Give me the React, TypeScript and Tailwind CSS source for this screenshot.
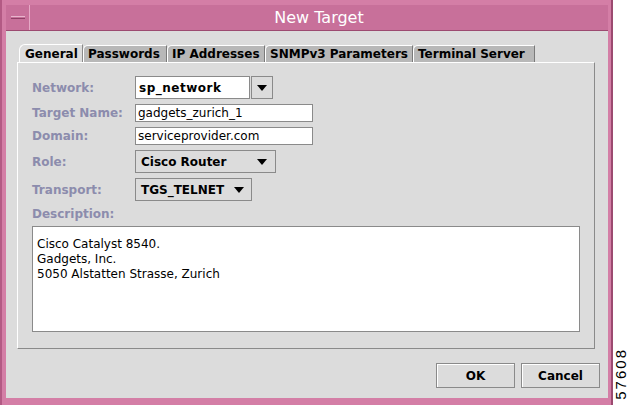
import React from 'react';

const font = { fontFamily: '"DejaVu Sans", "Liberation Sans", sans-serif' };

function Arrow() {
  return (
    <svg width="10" height="6" viewBox="0 0 10 6" className="shrink-0">
      <path d="M0 0 H10 L5 6 Z" fill="#000" />
    </svg>
  );
}

const tabs = [
  { name: 'General', w: 'w-[64px]' },
  { name: 'Passwords', w: 'w-[84px]' },
  { name: 'IP Addresses', w: 'w-[98px]' },
  { name: 'SNMPv3 Parameters', w: 'w-[148px]' },
  { name: 'Terminal Server', w: 'w-[122px]' },
];

function Label({ children }: { children: React.ReactNode }) {
  return <div className="w-[103px] shrink-0 text-[12px] font-bold text-[#8c8cad]">{children}</div>;
}

export default function App() {
  return (
    <div className="flex h-[405px] w-[628px] bg-white" style={font}>
      {/* window frame */}
      <div className="flex h-[405px] w-[613px] flex-col border-l-2 border-r-2 border-l-[#b35a84] border-r-[#9c4a70] bg-[#d47ea6] pl-[4px] pr-[3px] pt-[5px] pb-[7px]">
        {/* title bar */}
        <div className="flex h-[26px] shrink-0 items-center border-b border-[#9c4a70] bg-[#c8709a]">
          <div className="flex h-full w-[24px] items-center justify-center border-r border-[#e6a9c6]">
            <div className="h-[3px] w-[14px] border-y border-t-[#e8b6cd] border-b-[#8f4166] bg-[#c8709a]" />
          </div>
          <div className="flex-1 text-center text-[16px] text-white">New Target</div>
        </div>

        {/* content */}
        <div className="flex flex-1 flex-col bg-[#dcdcdc] pl-[11px] pr-[7px]">
          {/* tabs */}
          <div className="mt-[13px] flex h-[18px] items-end pl-[2px]">
            {tabs.map((t, i) => (
              <div
                key={t.name}
                className={
                  i === 0
                    ? `${t.w} flex h-[18px] items-center rounded-tl-[6px] border-l border-t border-r border-l-white border-t-white border-r-[#8a8a8a] bg-[#dcdcdc] pl-[5px] text-[12px] font-bold text-black`
                    : `${t.w} flex h-[17px] items-center rounded-tl-[5px] border-l border-t border-r border-l-white border-t-white border-r-[#7a7a7a] bg-[#b8b8b8] pl-[4px] text-[12px] font-bold text-black`
                }
              >
                {t.name}
              </div>
            ))}
          </div>

          {/* panel */}
          <div className="flex h-[287px] w-[578px] flex-col border-l border-t border-r border-b border-l-white border-t-white border-r-[#8a8a8a] border-b-[#8a8a8a] px-[14px] pt-[13px] pb-[16px]">
            <div className="flex flex-col gap-[5px]">
              <div className="flex h-[23px] items-center">
                <Label>Network:</Label>
                <div className="flex h-[23px]">
                  <div className="flex w-[115px] items-center border border-[#8a8a8a] bg-white pl-[3px] text-[12px] font-bold tracking-[0.5px] text-black">
                    sp_network
                  </div>
                  <div className="ml-[1px] flex w-[22px] items-center justify-center border border-[#8a8a8a] bg-[#dcdcdc]">
                    <Arrow />
                  </div>
                </div>
              </div>
              <div className="flex h-[18px] items-center">
                <Label>Target Name:</Label>
                <div className="flex h-[18px] w-[178px] items-center border border-[#8a8a8a] bg-white pl-[2px] text-[12px] text-black">
                  gadgets_zurich_1
                </div>
              </div>
              <div className="flex h-[18px] items-center">
                <Label>Domain:</Label>
                <div className="flex h-[18px] w-[178px] items-center border border-[#8a8a8a] bg-white pl-[2px] text-[12px] text-black">
                  serviceprovider.com
                </div>
              </div>
              <div className="flex h-[23px] items-center">
                <Label>Role:</Label>
                <div className="flex h-[23px] w-[141px] items-center justify-between border border-[#8a8a8a] bg-[#dcdcdc] pl-[5px] pr-[8px] text-[12px] font-bold text-black">
                  <span>Cisco Router</span>
                  <Arrow />
                </div>
              </div>
              <div className="flex h-[23px] items-center">
                <Label>Transport:</Label>
                <div className="flex h-[23px] w-[117px] items-center justify-between border border-[#8a8a8a] bg-[#dcdcdc] pl-[5px] pr-[7px] text-[12px] font-bold text-black">
                  <span>TGS_TELNET</span>
                  <Arrow />
                </div>
              </div>
              <div className="mt-[1px] flex h-[13px] items-center">
                <Label>Description:</Label>
              </div>
            </div>
            <div className="mt-[6px] flex-1 border border-[#8a8a8a] bg-white px-[4px] pt-[10px] text-[12px] leading-[15px] text-black">
              <div>Cisco Catalyst 8540.</div>
              <div>Gadgets, Inc.</div>
              <div>5050 Alstatten Strasse, Zurich</div>
            </div>
          </div>

          {/* buttons */}
          <div className="mt-[14px] flex justify-end gap-[6px] pr-[1px]">
            <button className="flex h-[25px] w-[79px] items-center justify-center border border-[#8a8a8a] bg-[#dcdcdc] text-[12px] font-bold text-black shadow-[inset_1px_1px_0_#fff]">
              OK
            </button>
            <button className="flex h-[25px] w-[79px] items-center justify-center border border-[#8a8a8a] bg-[#dcdcdc] text-[12px] font-bold text-black shadow-[inset_1px_1px_0_#fff]">
              Cancel
            </button>
          </div>
        </div>
      </div>

      {/* figure number */}
      <div className="flex flex-1 items-end justify-center pb-[5px]">
        <div className="rotate-180 text-[15px] leading-none tracking-[2px] text-black [writing-mode:vertical-rl]" style={{ fontFamily: '"Liberation Sans", sans-serif' }}>
          57608
        </div>
      </div>
    </div>
  );
}
